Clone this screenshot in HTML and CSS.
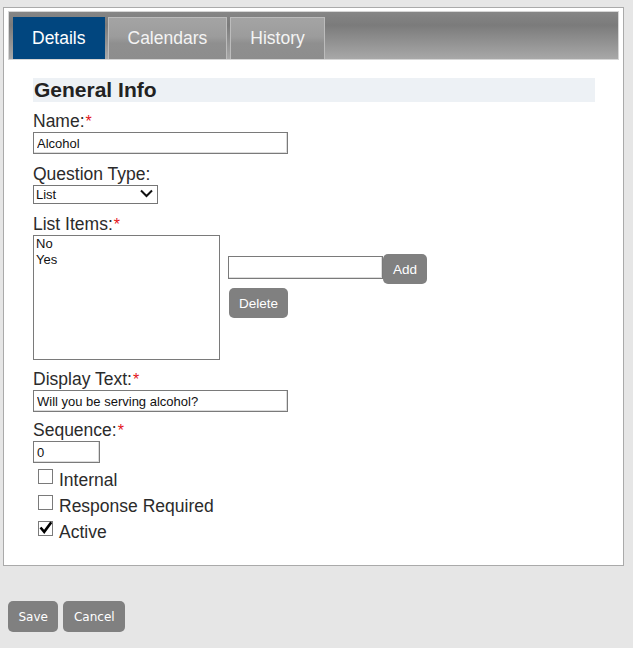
FILE: index.html
```html
<!DOCTYPE html>
<html>
<head>
<meta charset="utf-8">
<link rel="stylesheet" href="styles.css">
</head>
<body>
<div class="panel">
  <div class="tabbar">
    <div class="tab active">Details</div>
    <div class="tab">Calendars</div>
    <div class="tab">History</div>
  </div>
  <div class="content">
    <h2 class="section">General Info</h2>

    <label class="lbl m9">Name:<span class="req">*</span></label>
    <input class="txt wide" type="text" value="Alcohol">

    <label class="lbl m10">Question Type:</label>
    <div class="selwrap">
      <select class="sel"><option>List</option></select>
      <svg class="chev" width="13" height="9" viewBox="0 0 13 9"><path d="M1 1.5 L6.5 7 L12 1.5" fill="none" stroke="#111" stroke-width="2"/></svg>
    </div>

    <label class="lbl m10">List Items:<span class="req">*</span></label>
    <div class="listrow">
      <div class="listbox">
        <div class="opt">No</div>
        <div class="opt">Yes</div>
      </div>
      <div class="listctl">
        <div class="addrow">
          <input class="txt add" type="text" value="">
          <button class="btn">Add</button>
        </div>
        <button class="btn del">Delete</button>
      </div>
    </div>

    <label class="lbl m9">Display Text:<span class="req">*</span></label>
    <input class="txt wide" type="text" value="Will you be serving alcohol?">

    <label class="lbl m8">Sequence:<span class="req">*</span></label>
    <input class="txt seq" type="text" value="0">

    <div class="checks">
      <div class="check"><span class="box"></span>Internal</div>
      <div class="check"><span class="box"></span>Response Required</div>
      <div class="check"><span class="box"><svg width="13" height="13" viewBox="0 0 13 13"><path d="M1.5 6.5 L5.2 10.8 L12.3 1.2" fill="none" stroke="#000" stroke-width="2.6"/></svg></span>Active</div>
    </div>
  </div>
</div>
<div class="actions">
  <button class="abtn">Save</button>
  <button class="abtn">Cancel</button>
</div>
</body>
</html>
```

FILE: styles.css
```css
body {
  margin: 0;
  padding: 7px 0 0 3px;
  background: #e6e6e6;
  font-family: "Liberation Sans", Arial, sans-serif;
}

.panel {
  width: 621px;
  box-sizing: border-box;
  background: #fff;
  border: 1px solid #aaa;
  padding: 3px 4px 20px 4px;
}

.tabbar {
  display: flex;
  gap: 3px;
  height: 42px;
  padding: 5px 0 0 4px;
  box-sizing: content-box;
  border: 1px solid #d6d6d6;
  background: linear-gradient(#868686 0%, #7b7b7b 28%, #a8a8a8 100%);
  align-items: flex-end;
}

.tab {
  height: 42px;
  box-sizing: border-box;
  padding: 0 19px;
  line-height: 40px;
  font-size: 17.5px;
  color: #f4f4f4;
  border: 1px solid #bcbcbc;
  border-bottom: none;
  background: linear-gradient(#a4a4a4 0%, #9c9c9c 45%, #8f8f8f 62%, #8d8d8d 100%);
}

.tab.active {
  padding: 0 18px;
  background: #01467f;
  border-color: #01467f;
  color: #fff;
}

.content {
  padding: 0 24px 0 25px;
}

.section {
  margin: 18px 0 0 0;
  height: 24px;
  line-height: 24px;
  padding-left: 1px;
  font-size: 21px;
  font-weight: bold;
  color: #222;
  background: #edf1f5;
}

.lbl {
  display: block;
  font-size: 17.5px;
  line-height: 21px;
  color: #2b2b2b;
}

.m8 { margin-top: 8px; }
.m9 { margin-top: 9px; }
.m10 { margin-top: 10px; }

.req {
  color: #e3141b;
  font-size: 16px;
  margin-left: 1px;
}

.txt {
  display: block;
  box-sizing: border-box;
  height: 22px;
  margin: 0;
  padding: 0 3px;
  border: 1px solid #7a7a7a;
  box-shadow: inset 0 -1px 0 #dcdcdc, inset -1px 0 0 #dcdcdc;
  font-family: "Liberation Sans", Arial, sans-serif;
  font-size: 13px;
  color: #111;
  background: #fff;
  outline: none;
}

.wide { width: 255px; }
.seq { width: 67px; }
.add { width: 155px; height: 23px; margin-top: 2px; }

.selwrap {
  position: relative;
  width: 125px;
  height: 19px;
}

.sel {
  display: block;
  width: 125px;
  height: 19px;
  box-sizing: border-box;
  margin: 0;
  padding: 0 2px;
  border: 1px solid #767676;
  border-radius: 0;
  background: #fff;
  -webkit-appearance: none;
  appearance: none;
  font-family: "Liberation Sans", Arial, sans-serif;
  font-size: 13px;
  color: #111;
}

.chev {
  position: absolute;
  left: 107px;
  top: 4px;
}

.listrow {
  display: flex;
  align-items: flex-start;
}

.listbox {
  width: 187px;
  height: 125px;
  box-sizing: border-box;
  border: 1px solid #7a7a7a;
  padding: 0 2px;
}

.opt {
  font-size: 13px;
  line-height: 16px;
  color: #111;
}

.listctl {
  margin: 19px 0 0 8px;
}

.addrow {
  display: flex;
  align-items: flex-start;
}

.btn {
  height: 30px;
  padding: 0 10px;
  border: none;
  border-radius: 5px;
  background: #808080;
  color: #fff;
  font-family: "Liberation Sans", Arial, sans-serif;
  font-size: 13.5px;
}

.del {
  display: block;
  margin: 4px 0 0 1px;
}

.checks {
  margin-top: 4px;
}

.check {
  display: flex;
  align-items: flex-start;
  height: 26px;
  line-height: 26px;
  font-size: 17.5px;
  color: #2b2b2b;
}

.box {
  width: 15px;
  height: 15px;
  box-sizing: border-box;
  border: 1px solid #7a7a7a;
  margin: 2px 6px 0 5px;
  display: flex;
  background: #fff;
}

.box svg {
  display: block;
  margin: -1px 0 0 0;
}

.actions {
  display: flex;
  gap: 5px;
  margin: 35px 0 0 5px;
}

.abtn {
  height: 31px;
  padding: 0 10.5px;
  border: none;
  border-radius: 5px;
  background: #808080;
  color: #fff;
  font-family: "DejaVu Sans", Verdana, sans-serif;
  font-size: 12px;
}
```
